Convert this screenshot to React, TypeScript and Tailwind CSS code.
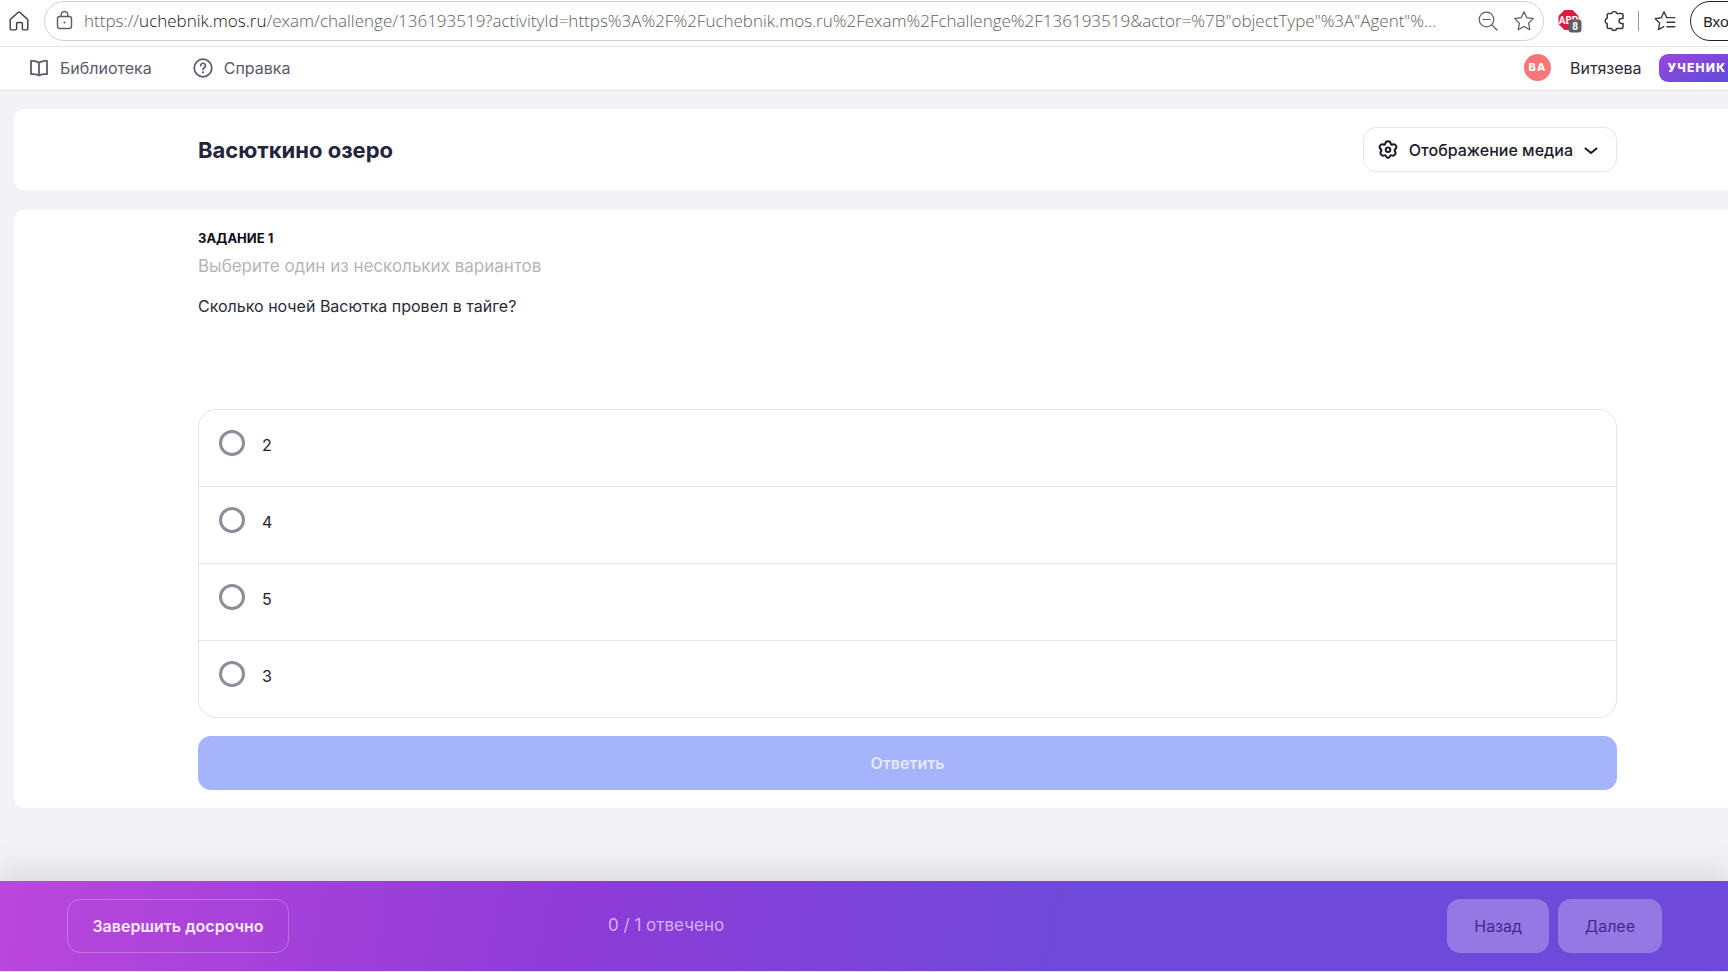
// Exam player page: browser toolbar, site header, question card and the bottom progress bar.
import React, { useState } from "react";

const OPTIONS = ["2", "4", "5", "3"];

type IconProps = { className?: string };

function HomeIcon({ className }: IconProps) {
  return (
    <svg viewBox="0 0 20 20" className={className} fill="none" stroke="currentColor" strokeWidth="1.4" strokeLinejoin="round">
      <path d="M1.2 8.6 9 1.4a1.5 1.5 0 0 1 2 0l7.8 7.2v9.2a1.1 1.1 0 0 1-1.1 1.1h-3.2a1.1 1.1 0 0 1-1.1-1.1v-5.2a1.1 1.1 0 0 0-1.1-1.1H8.7a1.1 1.1 0 0 0-1.1 1.1v5.2a1.1 1.1 0 0 1-1.1 1.1H2.3a1.1 1.1 0 0 1-1.1-1.1z" />
    </svg>
  );
}

function LockIcon({ className }: IconProps) {
  return (
    <svg viewBox="0 0 18 20" className={className} fill="none" stroke="currentColor" strokeWidth="1.4">
      <rect x="1.5" y="5.5" width="14" height="12" rx="2.2" />
      <path d="M5.2 5.5V3.9a3.3 3.3 0 0 1 6.6 0v1.6" />
      <circle cx="8.5" cy="11.5" r="1.1" fill="currentColor" stroke="none" />
    </svg>
  );
}

function ZoomOutIcon({ className }: IconProps) {
  return (
    <svg viewBox="0 0 20 20" className={className} fill="none" stroke="currentColor" strokeWidth="1.2" strokeLinecap="round">
      <circle cx="8.5" cy="8.5" r="7.3" />
      <path d="M5 8.5h7M13.8 13.8l5.2 5.2" />
    </svg>
  );
}

function StarIcon({ className }: IconProps) {
  return (
    <svg viewBox="0 0 22 22" className={className} fill="none" stroke="currentColor" strokeWidth="1.3" strokeLinejoin="round">
      <path d="m11 1.8 2.8 5.9 6.5.9-4.7 4.5 1.2 6.6-5.8-3.2-5.8 3.2 1.2-6.6-4.7-4.5 6.5-.9z" />
    </svg>
  );
}

function AdblockIcon({ className }: IconProps) {
  return (
    <svg viewBox="0 0 24 24" className={className}>
      <path d="M6.5 1h8l6 6v8l-6 6h-8l-6-6V7z" fill="#e0193f" />
      <text x="10.5" y="15" textAnchor="middle" fontSize="10" fontWeight="700" fontFamily="Roboto, sans-serif" fill="#fff">
        ABP
      </text>
      <rect x="10.5" y="10.5" width="13" height="13" rx="3" fill="#5f5f63" />
      <text x="17" y="20.5" textAnchor="middle" fontSize="10" fontWeight="700" fontFamily="Roboto, sans-serif" fill="#fff">
        8
      </text>
    </svg>
  );
}

function PuzzleIcon({ className }: IconProps) {
  return (
    <svg viewBox="0 0 20 20" className={className} fill="none" stroke="currentColor" strokeWidth="1.4" strokeLinejoin="round">
      <path d="M5.2 3.2h2.6a2.5 2.5 0 0 1 4.8 0h4.2a1.4 1.4 0 0 1 1.4 1.4v3.2h-1.4a2.2 2.2 0 0 0 0 4.4h1.4v3.2a1.4 1.4 0 0 1-1.4 1.4h-4.2a2.5 2.5 0 0 1-4.8 0H5.2a1.4 1.4 0 0 1-1.4-1.4v-3a2.5 2.5 0 0 1 0-4.8V4.6a1.4 1.4 0 0 1 1.4-1.4z" />
    </svg>
  );
}

function FavoritesIcon({ className }: IconProps) {
  return (
    <svg viewBox="0 0 22 22" className={className} fill="none" stroke="currentColor" strokeWidth="1.4" strokeLinejoin="round" strokeLinecap="round">
      <path d="M12.6 7.4 10 1.8 7.3 7.7l-6.2.9 4.5 4.5-1.2 6.6 5.3-3" />
      <path d="M13 7.6h7.8M13 12.2h7.8M13 16.8h7.8" />
    </svg>
  );
}

function BookIcon({ className }: IconProps) {
  return (
    <svg viewBox="0 0 20 20" className={className} fill="none" stroke="currentColor" strokeWidth="1.8" strokeLinejoin="round">
      <path d="M2 3c3-.3 5.5.2 8 1.6C12.5 3.2 15 2.7 18 3v13.2c-3-.3-5.5 0-8 1.3-2.5-1.3-5-1.6-8-1.3zM10 4.6v12.9" />
    </svg>
  );
}

function HelpIcon({ className }: IconProps) {
  return (
    <svg viewBox="0 0 20 20" className={className} fill="none" stroke="currentColor" strokeWidth="1.7" strokeLinecap="round">
      <circle cx="10" cy="10" r="8.8" />
      <path d="M7.6 7.7a2.4 2.4 0 1 1 3.7 2c-.8.5-1.3.9-1.3 1.8" />
      <circle cx="10" cy="14.3" r="1.1" fill="currentColor" stroke="none" />
    </svg>
  );
}

// Five lobes around a ring
function GearIcon({ className }: IconProps) {
  return (
    <svg viewBox="0 0 20 20" className={className} fill="none" stroke="currentColor" strokeWidth="2" strokeLinejoin="round">
      <path d="M7.3 3.6C7.7.4 12.3.4 12.7 3.6c.1.9.8 1.3 1.7.9 3-1.2 5.3 2.6 2.8 4.6-.7.6-.8 1.2-.3 2 1.7 2.7-.7 5.4-3.3 4.3-.8-.3-1.3 0-1.6.8-.9 2.4-3.1 2.4-4 0-.3-.8-.8-1.1-1.6-.8-2.6 1.1-5-1.6-3.3-4.3.5-.8.4-1.4-.3-2C.3 7.1 2.6 3.3 5.6 4.5c.9.4 1.6 0 1.7-.9z" />
      <circle cx="10" cy="9.8" r="2.3" />
    </svg>
  );
}

function BrowserBar() {
  return (
    <div className="flex h-[47px] items-start border-b border-[#e4e5e4] bg-white pt-px text-[#3b3b3b]">
      <button type="button" aria-label="Домашняя страница" className="flex h-10 w-11 shrink-0 items-center pl-[9px]">
        <HomeIcon className="size-5" />
      </button>
      <div className="flex h-10 min-w-0 flex-1 items-center rounded-full border border-[#cfd3cf] pr-2 pl-[11px] text-[#5f5f5f]">
        <LockIcon className="h-5 w-[18px] shrink-0" />
        <div
          role="textbox"
          aria-label="Адресная строка"
          contentEditable
          suppressContentEditableWarning
          className="ml-[10px] min-w-0 flex-1 overflow-hidden whitespace-nowrap font-['Open_Sans',sans-serif] text-[17px] leading-6 font-[350] text-[#5c605c] outline-none"
        >
          https://<span className="text-[#141414]">uchebnik.mos.ru</span>
          /exam/challenge/136193519?activityId=https%3A%2F%2Fuchebnik.mos.ru%2Fexam%2Fchallenge%2F136193519&amp;actor=%7B"objectType"%3A"Agent"%...
        </div>
        <button type="button" aria-label="Масштаб" className="shrink-0">
          <ZoomOutIcon className="size-5" />
        </button>
        <button type="button" aria-label="Добавить в избранное" className="ml-[15px] shrink-0">
          <StarIcon className="size-[22px]" />
        </button>
      </div>
      <div className="flex h-10 w-[184px] shrink-0 items-center overflow-hidden pl-[14px]">
        <button type="button" aria-label="Adblock Plus" className="shrink-0">
          <AdblockIcon className="size-6" />
        </button>
        <button type="button" aria-label="Расширения" className="ml-[21px] shrink-0">
          <PuzzleIcon className="size-[22px]" />
        </button>
        <span className="ml-[13px] h-5 w-px shrink-0 bg-[#9a9a9a]" />
        <button type="button" aria-label="Избранное" className="ml-[15px] shrink-0">
          <FavoritesIcon className="size-[22px]" />
        </button>
        <button
          type="button"
          className="ml-[14px] h-10 shrink-0 rounded-full border border-[#222] px-3 font-['Noto_Sans',sans-serif] text-[15px] text-[#222]"
        >
          Вход
        </button>
      </div>
    </div>
  );
}

function SiteHeader() {
  return (
    <header className="flex h-11 items-center border-b border-[#e2e2e8] bg-white pb-0.5 pl-[29px] text-base text-[#5b5b6b]">
      <nav className="flex items-center gap-[41px]">
        <a href="#library" className="flex items-center gap-[11px]">
          <BookIcon className="size-5" />
          Библиотека
        </a>
        <a href="#help" className="flex items-center gap-[11px]">
          <HelpIcon className="size-5" />
          Справка
        </a>
      </nav>
      <div className="ml-auto flex w-[204px] items-center overflow-hidden">
        <span className="flex size-[27px] shrink-0 items-center justify-center rounded-full bg-[#fb7476] text-[11px] font-extrabold tracking-widest text-white">
          ВА
        </span>
        <a href="#profile" className="ml-[19px] text-[#2b2b3a]">
          Витязева
        </a>
        <span className="ml-[17px] shrink-0 rounded-[9px] bg-linear-to-br from-[#9a45dc] to-[#5b4ad8] px-[9px] text-xs leading-7 font-extrabold tracking-widest text-white">
          УЧЕНИК
        </span>
      </div>
    </header>
  );
}

function QuestionCard() {
  const [answer, setAnswer] = useState<string | null>(null);

  return (
    <section className="mt-5 rounded-l-[10px] bg-white pt-5 pr-[111px] pb-[18px] pl-[184px]">
      <h2 className="text-[13px] leading-4 font-bold text-[#0d0d1a]">ЗАДАНИЕ 1</h2>
      <p className="mt-2 text-[17px] leading-6 text-[#b4b5bb]">Выберите один из нескольких вариантов</p>
      <p className="mt-4 text-base leading-6 text-[#2b2b38]">Сколько ночей Васютка провел в тайге?</p>

      <form onSubmit={(e: React.FormEvent) => e.preventDefault()}>
        <fieldset className="mt-[91px] divide-y divide-[#e6e6e9] rounded-[18px] border border-[#e6e6e9]">
          {OPTIONS.map((option) => (
            <label key={option} className="flex h-[77px] items-start gap-[17px] px-5 pt-5 text-base leading-[30px] text-[#1e1e2a] last:h-[76px]">
              <input
                type="radio"
                name="answer"
                value={option}
                checked={answer === option}
                onChange={() => setAnswer(option)}
                className="size-[26px] shrink-0 appearance-none rounded-full border-[3px] border-[#8e8e9a] checked:border-8 checked:border-[#4a66f5]"
              />
              {option}
            </label>
          ))}
        </fieldset>
        <button type="submit" className="mt-[18px] h-[54px] w-full rounded-[13px] bg-[#a5b4fb] text-base font-semibold text-[#e4e9fe]">
          Ответить
        </button>
      </form>
    </section>
  );
}

function BottomBar() {
  return (
    <footer className="mt-auto mb-px flex h-[90px] items-center bg-[linear-gradient(100deg,#bb47dc_0%,#8e3bd7_33%,#6f49d9_62%)] pr-[66px] pl-[67px] text-base shadow-[0_-2px_32px_8px_rgba(0,0,0,0.1)]">
      <button type="button" className="h-[54px] w-[222px] rounded-[13px] border border-white/25 font-semibold text-[#fbeaff]">
        Завершить досрочно
      </button>
      <p className="ml-[20%] text-[17px] text-[#d6aef3]">0 / 1 отвечено</p>
      <div className="ml-auto flex gap-[9px]">
        <button type="button" className="h-[54px] rounded-[13px] bg-[#9578e3] px-[27px] text-[#432a92]">
          Назад
        </button>
        <button type="button" className="h-[54px] rounded-[13px] bg-[#9578e3] px-[27px] text-[#432a92]">
          Далее
        </button>
      </div>
    </footer>
  );
}

export default function App() {
  return (
    <div className="flex min-h-screen flex-col bg-white font-['Inter',sans-serif]">
      <BrowserBar />
      <SiteHeader />
      <div className="flex flex-1 flex-col bg-[#f2f2f7]">
        <main className="pt-[18px] pb-10 pl-[14px]">
          <section className="flex items-center justify-between rounded-l-[10px] bg-white py-[18px] pr-[111px] pl-[184px]">
            <h1 className="text-[22px] leading-8 font-bold text-[#24243a]">Васюткино озеро</h1>
            <button
              type="button"
              aria-haspopup="menu"
              className="flex h-[45px] items-center rounded-[13px] border border-[#e6e6ea] pr-[18px] pl-[14px] text-base font-medium text-[#1b1b29]"
            >
              <GearIcon className="size-5" />
              <span className="ml-[11px]">Отображение медиа</span>
              <svg viewBox="0 0 14 14" className="ml-[11px] size-[14px]" fill="none" stroke="currentColor" strokeWidth="2" strokeLinecap="round" strokeLinejoin="round">
                <path d="m1.5 5.5 5.5 4.5 5.5-4.5" />
              </svg>
            </button>
          </section>
          <QuestionCard />
        </main>
        <BottomBar />
      </div>
    </div>
  );
}
